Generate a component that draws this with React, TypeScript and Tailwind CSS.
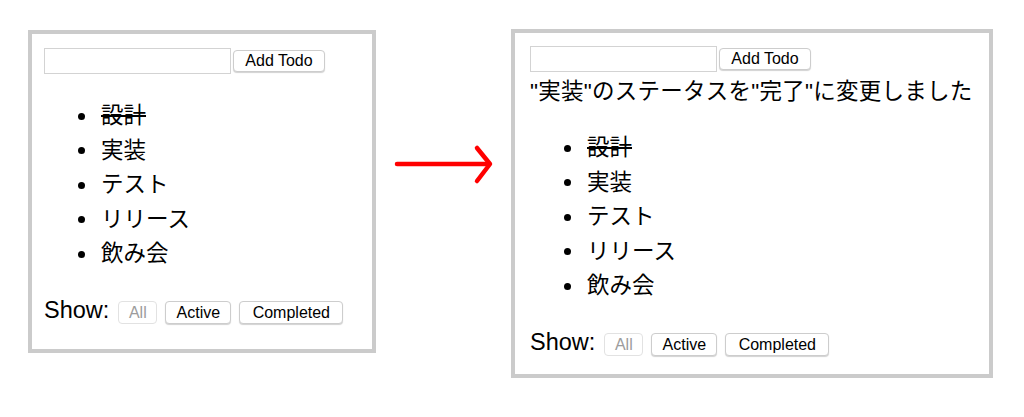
const font = { fontFamily: '"Liberation Sans", "Noto Sans CJK JP", sans-serif' };

type Todo = { text: string; done: boolean };

const todos: Todo[] = [
  { text: "設計", done: true },
  { text: "実装", done: false },
  { text: "テスト", done: false },
  { text: "リリース", done: false },
  { text: "飲み会", done: false },
];

function Btn({ label, disabled, w }: { label: string; disabled?: boolean; w: string }) {
  return (
    <button
      type="button"
      className={
        disabled
          ? `${w} h-[23px] rounded-[4px] border border-[#e2e2e2] bg-white pt-[1px] text-[16px] leading-none text-[#9c9c9c]`
          : `${w} h-[23px] rounded-[4px] border border-[#cdcdcd] bg-white pt-[1px] text-[16px] leading-none text-black shadow-[0_1px_1px_rgba(0,0,0,0.18)]`
      }
    >
      {label}
    </button>
  );
}

function AddRow() {
  return (
    <div className="flex h-[26px] items-center">
      <input type="text" className="h-[26px] w-[187px] border border-[#d3d3d3] bg-white outline-none" />
      <button
        type="button"
        className="ml-[2px] h-[22px] w-[92px] rounded-[4px] border border-[#cdcdcd] bg-white text-[16px] leading-none text-black shadow-[0_1px_1px_rgba(0,0,0,0.18)]"
      >
        Add Todo
      </button>
    </div>
  );
}

function TodoList({ className }: { className: string }) {
  return (
    <ul className={className}>
      {todos.map((t) => (
        <li key={t.text} className="flex h-[34.5px] items-center pl-[34px]">
          <span className="h-[7px] w-[7px] rounded-full bg-black" />
          <span className={`ml-[16px] text-[22.5px] leading-none ${t.done ? "line-through" : ""}`}>{t.text}</span>
        </li>
      ))}
    </ul>
  );
}

function Footer() {
  return (
    <div className="mt-[25px] flex items-start">
      <span className="text-[23.5px] leading-[26px]">Show:</span>
      <div className="ml-[9px] mt-[4px] flex gap-[8px]">
        <Btn label="All" disabled w="w-[39px]" />
        <Btn label="Active" w="w-[66px]" />
        <Btn label="Completed" w="w-[104px]" />
      </div>
    </div>
  );
}

export default function App() {
  return (
    <div className="flex h-[417px] w-[1024px] items-start bg-white text-black" style={font}>
      <div className="ml-[28px] mt-[30px] h-[323px] w-[348px] border-4 border-[#cbcbcb] pl-[12px] pt-[14px]">
        <AddRow />
        <TodoList className="mt-[25px]" />
        <Footer />
      </div>

      <svg className="mt-[134px] shrink-0" width="135" height="60" viewBox="0 0 135 60">
        <line x1="21" y1="30" x2="113" y2="30" stroke="#ff0000" strokeWidth="4.5" strokeLinecap="round" />
        <polyline
          points="101,14 114,30 101,47"
          fill="none"
          stroke="#ff0000"
          strokeWidth="4.5"
          strokeLinecap="round"
          strokeLinejoin="round"
        />
      </svg>

      <div className="mt-[29px] h-[349px] w-[482px] border-4 border-[#cbcbcb] pl-[15px] pt-[13px]">
        <AddRow />
        <div className="mt-[3px] text-[22.5px] leading-[34px] tracking-[0.25px]">"実装"のステータスを"完了"に変更しました</div>
        <TodoList className="mt-[22px]" />
        <Footer />
      </div>
    </div>
  );
}
